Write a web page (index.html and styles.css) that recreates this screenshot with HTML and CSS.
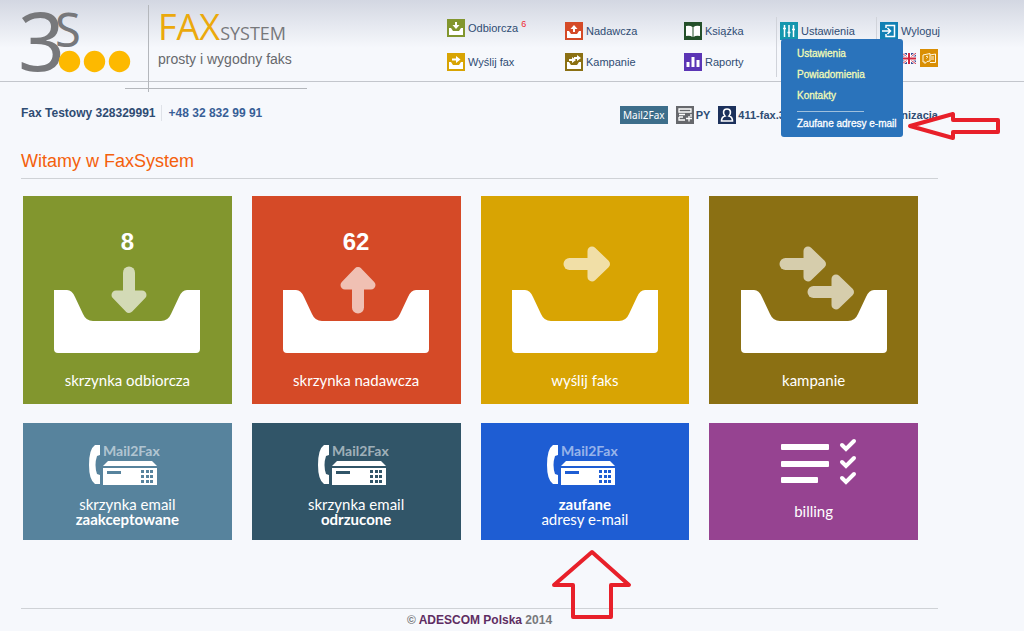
FILE: index.html
```html
<!DOCTYPE html>
<html lang="pl">
<head>
<meta charset="utf-8">
<title>FaxSystem</title>
<link rel="stylesheet" href="styles.css">
</head>
<body>
<svg class="defs" aria-hidden="true">
  <defs>
    <g id="arrow">
      <path d="M0-17.5V5" fill="none" stroke="#fff" stroke-width="12" stroke-linecap="round"/>
      <path d="M-13 5H13L0 18.500Z" fill="#fff" stroke="#fff" stroke-width="9" stroke-linejoin="round"/>
    </g>
    <path id="tray" fill="#fff" d="M0 25H13Q18 25 21 32L29 49Q32 56 39 56H107Q114 56 117 49L125 32Q128 25 133 25H146V84Q146 88 142 88H4Q0 88 0 84Z"/>
    <path id="minitray" fill="#fff" d="M2 9H4L6 12H12L14 9H16V16H2Z"/>
    <g id="fax" fill="#fff">
      <path d="M6 1H11V11L8 12Q5 21 8 30L11 31V40H6Q0 36 0 21Q0 5 6 1Z"/>
      <path d="M19 17H63L68 22H14Z"/>
      <path fill-rule="evenodd" d="M14 24H68V41H14ZM18 27V30H32V27ZM52 26V29H55V26ZM57 26V29H60V26ZM61 26V29H64V26ZM52 31V34H55V31ZM57 31V34H60V31ZM61 31V34H64V31ZM52 36V39H55V36ZM57 36V39H60V36ZM61 36V39H64V36Z"/>
    </g>
  </defs>
</svg>

<header class="header">
  <a class="logo" href="#" aria-label="3S">
    <svg width="112" height="72" viewBox="0 0 112 72">
      <text class="logo-three" x="-3" y="66">3</text>
      <text class="logo-s" x="34" y="42">S</text>
      <g fill="#fdb900"><circle cx="48.500" cy="56.500" r="10.700"/><circle cx="73.500" cy="56.500" r="10.700"/><circle cx="98.500" cy="56.500" r="10.700"/></g>
    </svg>
  </a>
  <div class="brand">
    <div class="brand-name"><span class="brand-fax">FAX</span><span class="brand-system">SYSTEM</span></div>
    <div class="brand-tag">prosty i wygodny faks</div>
  </div>
  <nav class="nav">
    <div class="nav-col">
      <a class="nav-item raised" href="#"><svg class="icon" viewBox="0 0 18 18"><rect width="18" height="18" fill="#82962e"/><use href="#minitray"/><path d="M8 3H10V6H12.500L9 10L5.500 6H8Z" fill="#fff"/></svg><span>Odbiorcza<sup>6</sup></span></a>
      <a class="nav-item" href="#"><svg class="icon" viewBox="0 0 18 18"><rect width="18" height="18" fill="#d8a403"/><use href="#minitray"/><path d="M5 5.500H9V3L13.500 6.500L9 10V7.500H5Z" fill="#fff"/></svg><span>Wyślij fax</span></a>
    </div>
    <div class="nav-col">
      <a class="nav-item" href="#"><svg class="icon" viewBox="0 0 18 18"><rect width="18" height="18" fill="#d54a27"/><use href="#minitray"/><path d="M8 10H10V7H12.500L9 3L5.500 7H8Z" fill="#fff"/></svg><span>Nadawcza</span></a>
      <a class="nav-item" href="#"><svg class="icon" viewBox="0 0 18 18"><rect width="18" height="18" fill="#8b7013"/><use href="#minitray"/><path d="M4 6H7V4L11 7L7 10V8H4ZM9 4H12V2L16 5L12 8V6H9Z" fill="#fff"/></svg><span>Kampanie</span></a>
    </div>
    <div class="nav-col">
      <a class="nav-item" href="#"><svg class="icon" viewBox="0 0 18 18"><rect width="18" height="18" fill="#24502a"/><path d="M2 4Q6 3 8.500 5V15Q6 13 2 14ZM16 4Q12 3 9.500 5V15Q12 13 16 14Z" fill="#fff"/></svg><span>Książka</span></a>
      <a class="nav-item" href="#"><svg class="icon" viewBox="0 0 18 18"><rect width="18" height="18" fill="#5b35b5"/><path d="M2.500 9H5.500V14H2.500ZM7.500 4H10.500V14H7.500ZM12.500 7H15.500V14H12.500Z" fill="#fff"/></svg><span>Raporty</span></a>
    </div>
    <div class="nav-col ruled">
      <a class="nav-item" href="#"><svg class="icon" viewBox="0 0 18 18"><rect width="18" height="18" fill="#1596ae"/><path d="M4.500 3V15M9 3V15M13.500 3V15M3 6.500H6M7.500 10.500H10.500M12 7.500H15" stroke="#fff" stroke-width="1.500"/></svg><span>Ustawienia</span></a>
      <div class="menu">
        <a href="#">Ustawienia</a>
        <a href="#">Powiadomienia</a>
        <a href="#">Kontakty</a>
        <hr>
        <a class="menu-last" href="#">Zaufane adresy e-mail</a>
        <svg class="pointer-left" width="94" height="34" viewBox="0 0 94 34" fill="none" stroke="#e8202a" stroke-width="4" stroke-linejoin="round"><path d="M3 17L46 5V11H91V23H46V29Z"/></svg>
      </div>
    </div>
    <div class="nav-col ruled">
      <a class="nav-item" href="#"><svg class="icon" viewBox="0 0 18 18"><rect width="18" height="18" fill="#1180b4"/><path d="M6 6V3.500H14.500V14.500H6V12M2 9H10M7.500 6L10.500 9L7.500 12" fill="none" stroke="#fff" stroke-width="1.500"/></svg><span>Wyloguj</span></a>
      <div class="tools">
        <a href="#" aria-label="English"><svg width="14" height="11" viewBox="0 0 14 11"><rect width="14" height="11" fill="#3b4b95"/><path d="M0 0L14 11M14 0L0 11" stroke="#fff" stroke-width="2.500"/><path d="M0 0L14 11M14 0L0 11" stroke="#d23a50"/><path d="M7 0V11M0 5.500H14" stroke="#fff" stroke-width="4"/><path d="M7 0V11M0 5.500H14" stroke="#d2263f" stroke-width="2"/></svg></a>
        <a href="#" aria-label="Pomoc"><svg class="icon" viewBox="0 0 18 18"><rect width="18" height="18" fill="#d98e04"/><path d="M3 6L10 4.500V12L7 12.500L5 14.500V13H3ZM10 6L15.500 5V13.500H10M11 8H14M11 10H14M6 7.500Q8 6.500 7.500 8.500L6.500 9.500" fill="none" stroke="#fff8e0"/></svg></a>
      </div>
    </div>
  </nav>
</header>

<main class="page">
  <div class="status">
    <div class="account"><span>Fax Testowy 328329991</span><span class="phone">+48 32 832 99 91</span></div>
    <div class="session">
      <a class="mail-tag" href="#">Mail2Fax</a>
      <span class="badge"><svg class="icon" viewBox="0 0 18 18"><rect width="18" height="18" fill="#66686c"/><path d="M3 3H15V6H3ZM3 8.500H9M3 11V14H9M3 11H7M15 8V11M10 12.500H16M13 10V15.500" fill="none" stroke="#fff" stroke-width="1.300"/></svg>PY</span>
      <span class="badge"><svg class="icon" viewBox="0 0 18 18"><rect width="18" height="18" fill="#1c315c"/><path d="M9 3C4.500 3 5 8 7 10Q3.500 11 3.500 15H14.500Q14.500 11 11 10C13 8 13.500 3 9 3Z" fill="none" stroke="#fff" stroke-width="1.600"/></svg>411-fax.3s</span>
      <span class="org">organizacja</span>
    </div>
  </div>

  <h1>Witamy w FaxSystem</h1>

  <div class="tiles">
    <a class="tile inbox" href="#"><b class="count">8</b><svg width="146" height="88" viewBox="0 0 146 88"><use href="#tray"/><use href="#arrow" opacity=".65" transform="translate(75 25)"/></svg><span>skrzynka odbiorcza</span></a>
    <a class="tile outbox" href="#"><b class="count">62</b><svg width="146" height="88" viewBox="0 0 146 88"><use href="#tray"/><use href="#arrow" opacity=".65" transform="translate(75 25) rotate(180)"/></svg><span>skrzynka nadawcza</span></a>
    <a class="tile send" href="#"><b class="count"></b><svg width="146" height="88" viewBox="0 0 146 88"><use href="#tray"/><use href="#arrow" opacity=".65" transform="translate(75 -1) rotate(-90)"/></svg><span>wyślij faks</span></a>
    <a class="tile campaign" href="#"><b class="count"></b><svg width="146" height="88" viewBox="0 0 146 88"><use href="#tray"/><use href="#arrow" opacity=".65" transform="translate(62 -1) rotate(-90)"/><use href="#arrow" opacity=".65" transform="translate(90 27) rotate(-90)"/></svg><span>kampanie</span></a>

    <a class="tile small accepted" href="#"><svg width="76" height="42" viewBox="0 0 76 42"><use href="#fax"/><text x="14" y="12">Mail2Fax</text></svg><span>skrzynka email<br><b>zaakceptowane</b></span></a>
    <a class="tile small rejected" href="#"><svg width="76" height="42" viewBox="0 0 76 42"><use href="#fax"/><text x="14" y="12">Mail2Fax</text></svg><span>skrzynka email<br><b>odrzucone</b></span></a>
    <a class="tile small trusted" href="#"><svg width="76" height="42" viewBox="0 0 76 42"><use href="#fax"/><text x="14" y="12">Mail2Fax</text></svg><span><b>zaufane</b><br>adresy e-mail</span>
      <svg class="pointer-up" width="82" height="72" viewBox="0 0 82 72" fill="none" stroke="#e8202a" stroke-width="4" stroke-linejoin="round"><path d="M41 4L78 37H60V69H22V37H3Z"/></svg></a>
    <a class="tile small billing" href="#"><svg width="66" height="48" viewBox="0 0 66 48"><g fill="#fff"><rect y="6" width="48" height="6" rx="1"/><rect y="23" width="48" height="6" rx="1"/><rect y="39" width="37" height="6" rx="1"/></g><path d="M61 7L65 11L73 3M61 24L65 28L73 20M61 40L65 44L73 36" fill="none" stroke="#fff" stroke-width="4" stroke-linecap="round"/></svg><span>billing</span></a>
  </div>

  <footer class="footer">© <a href="#">ADESCOM Polska</a> 2014</footer>
</main>
</body>
</html>
```
FILE: styles.css
```css
* { box-sizing: border-box; }

body {
  margin: 0;
  background: #f6f8fc;
  color: #2f4c73;
  font: 12px/18px "Liberation Sans", Arial, sans-serif;
}

a { color: inherit; text-decoration: none; }
svg { display: block; flex: none; }
.defs { position: absolute; width: 0; height: 0; }
.icon { width: 18px; height: 18px; }

.header {
  display: flex;
  height: 82px;
  padding: 5px 86px 0 21px;
  border-bottom: 1px solid #c3c6cc;
  background: linear-gradient(#d3d7e2, #f6f8fc 48px);
}

.logo { width: 127px; flex: none; }
.logo svg { overflow: visible; }
.logo-three, .logo-s { fill: #77787b; font-family: "Noto Sans", sans-serif; }
.logo-three { font-size: 82px; }
.logo-s { font-size: 47px; }

.brand {
  position: relative;
  height: 87px;
  padding-left: 9px;
  border-left: 1px solid #b4b7bc;
  white-space: nowrap;
}
.brand::after {
  content: "";
  position: absolute;
  left: -24px;
  top: 83px;
  width: 182px;
  border-top: 1px solid #b4b7bc;
}
.brand-name {
  height: 44px;
  font-family: "Open Sans", sans-serif;
  line-height: 44px;
}
.brand-fax { color: #eba90c; font-size: 36px; }
.brand-system { color: #77787b; font-size: 18px; }
.brand-tag { color: #66686c; font-size: 14px; line-height: 20px; }

.nav {
  display: grid;
  grid-template-columns: 118px 119px 96px 100px 58px;
  margin-left: auto;
  padding-top: 12px;
  font-size: 11px;
}
.nav-col {
  position: relative;
  display: flex;
  flex-direction: column;
  gap: 13px;
  height: 60px;
  padding-top: 5px;
}
.nav-item { display: flex; gap: 3px; align-items: center; white-space: nowrap; }
.raised { margin: -3px 0 3px; }
.nav-item sup { margin-left: 3px; color: #f0282d; font-size: 9px; line-height: 9px; }
.ruled::before {
  content: "";
  position: absolute;
  left: -4px;
  height: 60px;
  top: 0;
  border-left: 1px solid #d0d3da;
}
.tools { display: flex; justify-content: flex-end; align-items: center; gap: 4px; margin-top: -4px; }

.menu {
  position: absolute;
  z-index: 1;
  left: 1px;
  top: 22px;
  display: flex;
  flex-direction: column;
  gap: 3px;
  width: 122px;
  padding: 6px 4px 4px 16px;
  border-radius: 3px;
  background: #2a73bb;
  color: #f1fbb5;
  font-size: 10px;
  line-height: 18px;
  -webkit-text-stroke: 0.3px;
  white-space: nowrap;
}
.menu hr { width: 67px; margin: 3px 0 0; border: 0; border-top: 1px solid #9fc0dd; }
.menu-last { color: #fff; }
.pointer-left { position: absolute; left: 126px; top: 70px; }

.page { padding: 0 86px 0 21px; }
.status {
  display: flex;
  justify-content: space-between;
  padding-top: 23px;
  font-weight: bold;
  line-height: 20px;
}
.account { display: flex; align-items: flex-start; line-height: 16px; }
.phone { margin-left: 5px; padding-left: 7px; border-left: 1px solid #dfe2e8; color: #385f97; }
.session { display: flex; align-items: center; gap: 8px; width: 318px; font-size: 11px; white-space: nowrap; }
.mail-tag {
  padding: 0 3px;
  background: #3d6e8b;
  color: #fff;
  font: 10px/18px "Noto Sans", sans-serif;
}
.badge { display: flex; align-items: center; gap: 2px; }
.org { margin-left: auto; }

h1 {
  margin: 25px 0 0;
  padding-bottom: 6px;
  border-bottom: 1px solid #cfd2d6;
  color: #f4600c;
  font-size: 18px;
  font-weight: normal;
  line-height: 22px;
}

.tiles {
  display: grid;
  grid-template-columns: repeat(4, 1fr);
  gap: 19px 20px;
  padding: 17px 20px 0 2px;
}
.tile {
  position: relative;
  display: flex;
  flex-direction: column;
  align-items: center;
  padding: 32px 0 14px;
  color: #fff;
  font: 15px/20px Lato, sans-serif;
  text-align: center;
}
.tile > svg { overflow: visible; }
.tile > span { margin-top: 17px; }
.count { height: 28px; margin-bottom: 9px; font: bold 24px/28px "Liberation Sans", sans-serif; }
.small { padding: 21px 0 13px; line-height: 15px; }
.small > span { margin-top: 11px; }
.small text { fill: #fff; fill-opacity: .55; font: bold 14px Lato, sans-serif; }

.inbox { background: #82962e; }
.outbox { background: #d54a27; }
.send { background: #d8a403; }
.campaign { background: #8b7013; }
.accepted { background: #57839d; }
.rejected { background: #315568; }
.trusted { background: #1e5dd3; }
.billing { padding-top: 15px; background: #964391; }
.billing > span { margin-top: 18px; }
.pointer-up { position: absolute; left: 70px; top: 125px; }

.footer {
  margin-top: 68px;
  border-top: 1px solid #cfd2d6;
  color: #77787b;
  font-weight: bold;
  line-height: 22px;
  text-align: center;
}
.footer a { color: #5e2d62; }
```
